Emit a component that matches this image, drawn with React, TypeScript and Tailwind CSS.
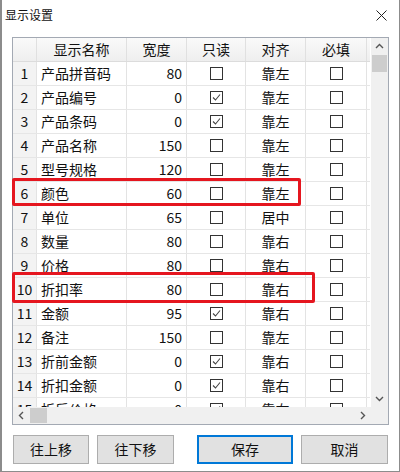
import React from "react";

type Row = { name: string; width: number; readOnly: boolean; align: string };

const rows: Row[] = [
  { name: "产品拼音码", width: 80, readOnly: false, align: "靠左" },
  { name: "产品编号", width: 0, readOnly: true, align: "靠左" },
  { name: "产品条码", width: 0, readOnly: true, align: "靠左" },
  { name: "产品名称", width: 150, readOnly: false, align: "靠左" },
  { name: "型号规格", width: 120, readOnly: false, align: "靠左" },
  { name: "颜色", width: 60, readOnly: false, align: "靠左" },
  { name: "单位", width: 65, readOnly: false, align: "居中" },
  { name: "数量", width: 80, readOnly: false, align: "靠右" },
  { name: "价格", width: 80, readOnly: false, align: "靠右" },
  { name: "折扣率", width: 80, readOnly: false, align: "靠右" },
  { name: "金额", width: 95, readOnly: true, align: "靠右" },
  { name: "备注", width: 150, readOnly: false, align: "靠左" },
  { name: "折前金额", width: 0, readOnly: true, align: "靠右" },
  { name: "折扣金额", width: 0, readOnly: true, align: "靠右" },
  { name: "折后价格", width: 0, readOnly: true, align: "靠右" },
];

function CheckBox({ checked }: { checked: boolean }) {
  return (
    <div className="w-[13px] h-[13px] border border-[#333] bg-white flex items-center justify-center">
      {checked && (
        <svg width="11" height="11" viewBox="0 0 11 11">
          <polyline points="2,5.5 4.5,8 9,2.5" fill="none" stroke="#444" strokeWidth="1.1" />
        </svg>
      )}
    </div>
  );
}

function Chevron({ dir }: { dir: "up" | "down" | "left" | "right" }) {
  const pts = {
    up: "1,5 4.5,1.5 8,5",
    down: "1,2 4.5,5.5 8,2",
    left: "5,1 1.5,4.5 5,8",
    right: "2,1 5.5,4.5 2,8",
  }[dir];
  const w = dir === "up" || dir === "down" ? 9 : 7;
  const h = dir === "up" || dir === "down" ? 7 : 9;
  return (
    <svg width={w} height={h} viewBox={`0 0 ${w} ${h}`}>
      <polyline points={pts} fill="none" stroke="#555" strokeWidth="1.4" />
    </svg>
  );
}

export default function App() {
  const cell = "border-r border-[#e3e3e3] h-full flex items-center";
  return (
    <div
      className="relative w-[400px] h-[472px] bg-white border-l-2 border-r border-b border-[#8c8c8c] text-[#111] overflow-hidden"
      style={{ fontFamily: '"Noto Sans CJK SC", "Liberation Sans", sans-serif' }}
    >
      {/* title bar */}
      <div className="h-[29px] flex items-center justify-between pl-[3px] pr-[12px]">
        <span className="text-[12px] leading-none">显示设置</span>
        <svg width="11" height="11" viewBox="0 0 11 11" className="mt-[2px]">
          <path d="M0.5 0.5 L10.5 10.5 M10.5 0.5 L0.5 10.5" stroke="#222" strokeWidth="1" />
        </svg>
      </div>

      {/* grid box */}
      <div className="ml-[10px] mt-[8px] w-[377px] h-[388px] border border-[#a3a9b3] flex flex-col">
        <div className="flex h-[369px]">
          <div className="w-[357px] h-full overflow-hidden">
            {/* header */}
            <div className="flex h-[24px] text-[14px] bg-gradient-to-b from-[#fafafa] to-[#eeeeee] border-b border-[#dcdcdc]">
              <div className="w-[24px] border-r border-[#e0e0e0]" />
              <div className="w-[90px] border-r border-[#e0e0e0] flex items-center justify-center">显示名称</div>
              <div className="w-[60px] border-r border-[#e0e0e0] flex items-center justify-center">宽度</div>
              <div className="w-[59px] border-r border-[#e0e0e0] flex items-center justify-center">只读</div>
              <div className="w-[60px] border-r border-[#e0e0e0] flex items-center justify-center">对齐</div>
              <div className="w-[61px] border-r border-[#e0e0e0] flex items-center justify-center">必填</div>
            </div>
            {rows.map((r, i) => (
              <div key={i} className="flex h-[24px] text-[14px] border-b border-[#e6e6e6]">
                <div className={`w-[24px] ${cell} justify-center bg-[#f3f3f3]`}>{i + 1}</div>
                <div className={`w-[90px] ${cell} pl-[4px]`}>{r.name}</div>
                <div className={`w-[60px] ${cell} justify-end pr-[4px]`}>{r.width}</div>
                <div className={`w-[59px] ${cell} justify-center`}>
                  <CheckBox checked={r.readOnly} />
                </div>
                <div className={`w-[60px] ${cell} justify-center`}>{r.align}</div>
                <div className={`w-[61px] ${cell} justify-center`}>
                  <CheckBox checked={false} />
                </div>
              </div>
            ))}
          </div>
          {/* vertical scrollbar */}
          <div className="w-[17px] h-full bg-[#f0f0f0] flex flex-col items-center ml-auto">
            <div className="h-[17px] flex items-center justify-center">
              <Chevron dir="up" />
            </div>
            <div className="w-[15px] h-[17px] bg-[#cdcdcd]" />
            <div className="flex-1" />
            <div className="h-[17px] flex items-center justify-center">
              <Chevron dir="down" />
            </div>
          </div>
        </div>
        {/* horizontal scrollbar */}
        <div className="flex h-[17px]">
          <div className="flex-1 bg-[#f0f0f0] flex items-center">
            <div className="w-[17px] flex items-center justify-center">
              <Chevron dir="left" />
            </div>
            <div className="w-[17px] h-[15px] bg-[#cdcdcd]" />
            <div className="flex-1" />
            <div className="w-[17px] flex items-center justify-center">
              <Chevron dir="right" />
            </div>
          </div>
          <div className="w-[17px] bg-[#f0f0f0]" />
        </div>
      </div>

      {/* buttons */}
      <div className="flex mt-[10px] pl-[11px] text-[14px]">
        <button className="w-[76px] h-[29px] bg-[#e1e1e1] border border-[#adadad]">往上移</button>
        <button className="ml-[8px] w-[77px] h-[29px] bg-[#e1e1e1] border border-[#adadad]">往下移</button>
        <button className="ml-[23px] w-[96px] h-[29px] bg-[#e1e1e1] border-2 border-[#0078d7]">保存</button>
        <button className="ml-[8px] w-[87px] h-[29px] bg-[#e1e1e1] border border-[#adadad]">取消</button>
      </div>

      {/* red annotation boxes */}
      <div className="absolute left-[10px] top-[178px] w-[289px] h-[28px] border-[3px] border-[#e5161f] rounded-[2px]" />
      <div className="absolute left-[10px] top-[272px] w-[303px] h-[31px] border-[3px] border-[#e5161f] rounded-[2px]" />
    </div>
  );
}
